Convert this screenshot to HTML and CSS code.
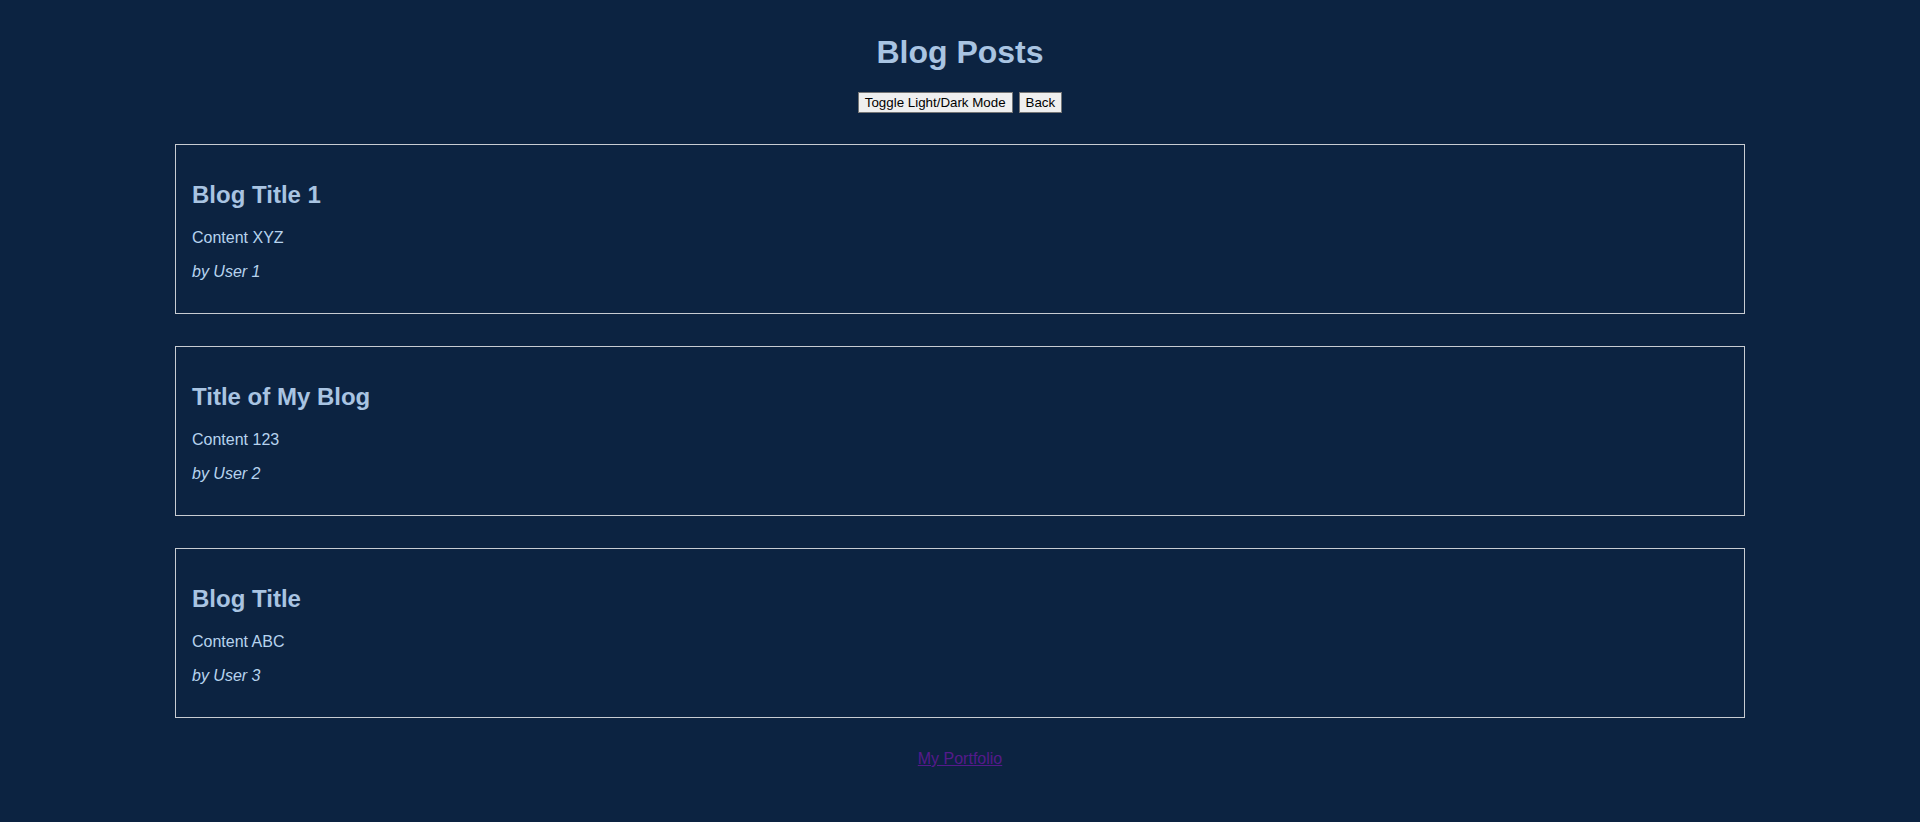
FILE: index.html
```html
<!DOCTYPE html>
<html lang="en">
<head>
<meta charset="utf-8">
<title>Blog Posts</title>
<link rel="stylesheet" href="styles.css">
</head>
<body>
<header class="page-header">
  <h1 class="page-title">Blog Posts</h1>
  <div class="controls">
    <button class="btn">Toggle Light/Dark Mode</button>
    <button class="btn">Back</button>
  </div>
</header>
<main class="posts">
  <article class="post">
    <h2 class="post-title">Blog Title 1</h2>
    <p class="post-content">Content XYZ</p>
    <p class="post-author">by User 1</p>
  </article>
  <article class="post">
    <h2 class="post-title">Title of My Blog</h2>
    <p class="post-content">Content 123</p>
    <p class="post-author">by User 2</p>
  </article>
  <article class="post">
    <h2 class="post-title">Blog Title</h2>
    <p class="post-content">Content ABC</p>
    <p class="post-author">by User 3</p>
  </article>
</main>
<footer class="page-footer">
  <a class="portfolio-link" href="#">My Portfolio</a>
</footer>
</body>
</html>
```

FILE: styles.css
```css
html, body {
  margin: 0;
  padding: 0;
}
body {
  background: #0c2341;
  color: #b7d3ee;
  font-family: "Liberation Sans", Arial, sans-serif;
  font-size: 16px;
}
.page-header {
  text-align: center;
  padding-top: 13px;
}
.page-title {
  font-size: 32px;
  font-weight: bold;
  color: #a9c4e2;
  margin: 21px 0 21px;
}
.controls {
  display: flex;
  justify-content: center;
  gap: 6px;
}
.btn {
  font-family: "Liberation Sans", Arial, sans-serif;
  font-size: 13.33px;
  color: #000;
  background: #efefef;
  border: 1px solid #767676;
  border-radius: 0;
  padding: 2px 6px;
  line-height: 15px;
}
.posts {
  padding-top: 31px;
}
.post {
  width: 80%;
  margin: 0 auto 32px;
  padding: 16px;
  border: 1px solid #c8ccd2;
}
.post-title {
  font-size: 24px;
  font-weight: bold;
  color: #a9c4e2;
  margin: 20px 0;
}
.post-content {
  margin: 16px 0;
}
.post-author {
  font-style: italic;
  margin: 16px 0;
}
.page-footer {
  text-align: center;
}
.portfolio-link {
  color: #551a8b;
}
```
